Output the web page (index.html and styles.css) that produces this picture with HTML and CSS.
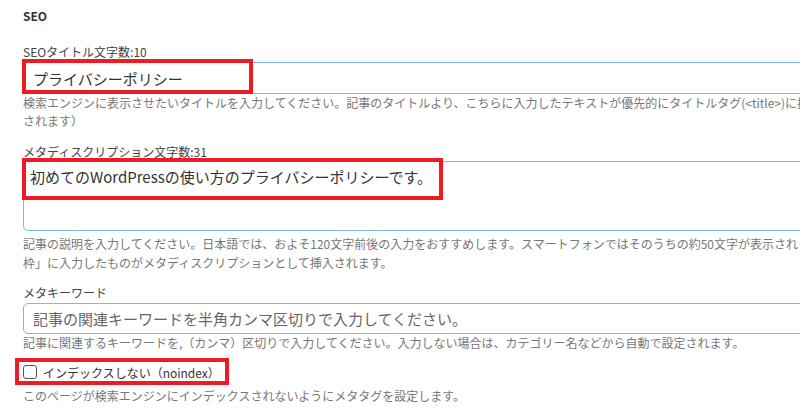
FILE: index.html
```html
<!DOCTYPE html>
<html lang="ja">
<head>
  <meta charset="UTF-8" />
  <meta name="viewport" content="width=device-width, initial-scale=1.0" />
  <title>SEO設定</title>
  <link rel="stylesheet" href="styles.css">
</head>
<body>
  <div class="seo-box">
    <h3 class="seo-title">SEO</h3>

    <div class="field field-title">
      <label class="field-label" for="seoTitle">SEOタイトル文字数:10</label>
      <div class="control">
        <input class="text-input" id="seoTitle" type="text" value="プライバシーポリシー">
        <span class="mark mark-title"></span>
      </div>
      <p class="help">検索エンジンに表示させたいタイトルを入力してください。記事のタイトルより、こちらに入力したテキストが優先的にタイトルタグ(&lt;title&gt;)に挿入<br>されます）</p>
    </div>

    <div class="field field-desc">
      <label class="field-label" for="seoDesc">メタディスクリプション文字数:31</label>
      <div class="control">
        <textarea class="text-area" id="seoDesc">初めてのWordPressの使い方のプライバシーポリシーです。</textarea>
        <span class="mark mark-desc"></span>
      </div>
      <p class="help help-desc">記事の説明を入力してください。日本語では、およそ120文字前後の入力をおすすめします。スマートフォンではそのうちの約50文字が表示されます。「<br>枠」に入力したものがメタディスクリプションとして挿入されます。</p>
    </div>

    <div class="field field-keywords">
      <label class="field-label" for="seoKeywords">メタキーワード</label>
      <div class="control">
        <input class="text-input text-input-kw" id="seoKeywords" type="text" placeholder="記事の関連キーワードを半角カンマ区切りで入力してください。">
      </div>
      <p class="help">記事に関連するキーワードを,（カンマ）区切りで入力してください。入力しない場合は、カテゴリー名などから自動で設定されます。</p>
    </div>

    <div class="field field-noindex">
      <div class="control">
        <label class="check-row">
          <input class="check" type="checkbox">
          <span>インデックスしない（noindex）</span>
        </label>
        <span class="mark mark-noindex"></span>
      </div>
      <p class="help">このページが検索エンジンにインデックスされないようにメタタグを設定します。</p>
    </div>
  </div>
</body>
</html>
```

FILE: styles.css
```css
* {
  box-sizing: border-box;
}
body {
  margin: 0;
  background: #fff;
  color: #333;
  font-family: "Noto Sans CJK JP", "Noto Sans", sans-serif;
  overflow: hidden;
}
.seo-box {
  width: 1000px;
  padding: 7px 0 0 23px;
}
.seo-title {
  margin: 0 0 18px;
  font-size: 12px;
  line-height: 18px;
  font-weight: bold;
}
.field-label {
  display: block;
  font-size: 12px;
  line-height: 18px;
  color: #444;
}
.control {
  position: relative;
  margin-top: 1px;
}
.text-input,
.text-area {
  display: block;
  width: 100%;
  border: 1px solid #7ab9ec;
  border-radius: 5px;
  background: #fff;
  color: #333;
  font-family: inherit;
  font-size: 15px;
  outline: none;
}
.text-input {
  height: 32px;
  padding: 0 9px;
}
.text-input-kw {
  height: 31px;
}
.text-input::placeholder {
  color: #666;
}
.text-area {
  height: 70px;
  padding: 4px 6px;
  line-height: 22px;
  resize: none;
  margin-top: -1px;
}
.help {
  margin: 0;
  font-size: 12px;
  line-height: 18px;
  color: #777;
}
.help-desc {
  margin-top: 3px;
  line-height: 19px;
}
.field-desc {
  margin-top: 13px;
}
.field-keywords {
  margin-top: 12px;
}
.field-noindex {
  margin-top: 10px;
}
.check-row {
  display: flex;
  align-items: center;
  gap: 6px;
  height: 20px;
  font-size: 12px;
  color: #333;
}
.check {
  appearance: none;
  margin: 0;
  width: 14px;
  height: 14px;
  border: 1px solid #555;
  border-radius: 3px;
  background: #fff;
}
.field-noindex .help {
  margin-top: 5px;
}

/* red annotation frames drawn over the screenshot */
.mark {
  position: absolute;
  border: 4px solid #ed1c24;
  pointer-events: none;
}
.mark-title {
  left: -1px;
  top: -3px;
  width: 231px;
  height: 35px;
}
.mark-desc {
  left: -1px;
  top: -3px;
  width: 421px;
  height: 42px;
}
.mark-noindex {
  left: -8px;
  top: -4px;
  width: 214px;
  height: 27px;
}
```
